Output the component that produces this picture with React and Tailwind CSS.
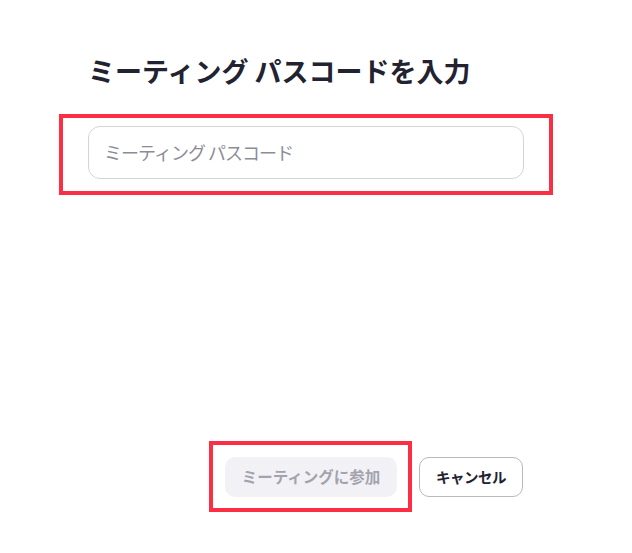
export default function App() {
  return (
    <div
      className="w-[632px] h-[553px] bg-white relative overflow-hidden"
      style={{ fontFamily: '"Noto Sans CJK JP", "Noto Sans", sans-serif' }}
    >
      <div className="flex flex-col pt-[56px] pl-[59px]">
        {/* Title */}
        <h1 className="ml-[29px] text-[27px] leading-[30px] font-bold text-[#222230]">
          ミーティング パスコードを入力
        </h1>

        {/* Passcode field (highlighted) */}
        <div className="mt-[28px] w-[494px] h-[81px] border-4 border-[#fc2e44] pl-[25px] pr-[25px] pt-[8px]">
          <div className="h-[53px] rounded-[12px] border-[1.5px] border-[#d4d4de] flex items-center px-[15px]">
            <span className="text-[18px] text-[#8c8c98] tracking-[-1px]">ミーティング パスコード</span>
          </div>
        </div>

        {/* Buttons */}
        <div className="mt-[246px] ml-[150px] flex items-center gap-[7px]">
          <div className="w-[203px] h-[71px] border-4 border-[#fc2e44] p-[12px] pr-[11px]">
            <div className="h-[40px] rounded-[10px] bg-[#f1f1f6] flex items-center justify-center">
              <span className="text-[15.5px] font-bold text-[#a3a3ad]">ミーティングに参加</span>
            </div>
          </div>
          <div className="w-[104px] h-[40px] rounded-[10px] border-[1.5px] border-[#b8b8c0] flex items-center justify-center">
            <span className="text-[14.5px] font-bold text-[#222230] tracking-[-0.5px]">キャンセル</span>
          </div>
        </div>
      </div>
    </div>
  );
}
